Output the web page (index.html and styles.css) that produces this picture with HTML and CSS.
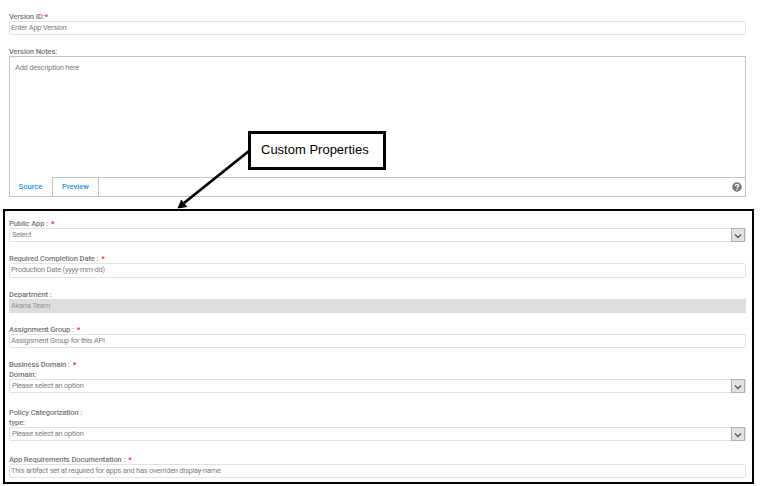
FILE: index.html
```html
<!DOCTYPE html>
<html lang="en">
<head>
<meta charset="utf-8">
<title>App Version</title>
<link rel="stylesheet" href="styles.css">
</head>
<body>
<main class="page">
  <section class="general">
    <div class="field">
      <div class="label"><span>Version ID:</span><b class="req tight">*</b></div>
      <div class="input"><span>Enter App Version</span></div>
    </div>
    <div class="field">
      <div class="label"><span>Version Notes:</span></div>
      <div class="editor">
        <div class="editor-body"><span>Add description here</span></div>
        <div class="tabs">
          <div class="tab active">Source</div>
          <div class="tab">Preview</div>
          <div class="tab-rest">
            <svg class="help" viewBox="0 0 10 10"><circle cx="5" cy="5" r="4.7" fill="#777"/><path d="M3.5 3.9C3.5 1.9 6.7 2 6.6 3.9C6.5 4.9 5.1 4.8 5.1 6" fill="none" stroke="#fff" stroke-width="1.3"/><path d="M4.4 6.8h1.4V8H4.4z" fill="#fff"/></svg>
          </div>
        </div>
      </div>
    </div>
  </section>
  <section class="custom">
    <div class="field">
      <div class="label"><span>Public App :</span><b class="req">*</b></div>
      <div class="input select"><span>Select</span><i class="arrow"><svg viewBox="0 0 12 12"><path d="M3 5.5l3 3 3-3" /></svg></i></div>
    </div>
    <div class="field">
      <div class="label"><span>Required Completion Date :</span><b class="req">*</b></div>
      <div class="input"><span>Production Date (yyyy-mm-dd)</span></div>
    </div>
    <div class="field">
      <div class="label"><span>Department :</span></div>
      <div class="input disabled"><span>Akana Team</span></div>
    </div>
    <div class="field">
      <div class="label"><span>Assignment Group :</span><b class="req">*</b></div>
      <div class="input"><span>Assignment Group for this API</span></div>
    </div>
    <div class="field business">
      <div class="label"><span>Business Domain :</span><b class="req">*</b></div>
      <div class="label"><span>Domain:</span></div>
      <div class="input select"><span>Please select an option</span><i class="arrow"><svg viewBox="0 0 12 12"><path d="M3 5.5l3 3 3-3" /></svg></i></div>
    </div>
    <div class="field policy">
      <div class="label"><span>Policy Categorization :</span></div>
      <div class="label"><span>type:</span></div>
      <div class="input select"><span>Please select an option</span><i class="arrow"><svg viewBox="0 0 12 12"><path d="M3 5.5l3 3 3-3" /></svg></i></div>
    </div>
    <div class="field">
      <div class="label"><span>App Requirements Documentation :</span><b class="req">*</b></div>
      <div class="input"><span>This artifact set at required for apps and has overriden display-name</span></div>
    </div>
  </section>
  <svg class="pointer" viewBox="0 0 761 486"><path d="M249 151L184 203" stroke="#000" stroke-width="2.8"/><path d="M177.5 208.5L181.2 199.5L187.5 207z"/></svg>
  <div class="callout">Custom Properties</div>
</main>
</body>
</html>
```
FILE: styles.css
```css
* { box-sizing: border-box; }
body { margin: 0; background: #fff; }
.page {
  position: relative;
  width: 761px;
  height: 486px;
  overflow: hidden;
  padding: 11px 7px 0 3px;
  font: 7.5px/10px Roboto, "Liberation Sans", sans-serif;
  letter-spacing: -0.25px;
  color: #808080;
}
.general { height: 198px; padding: 0 8px 0 6px; }
.custom {
  width: 751px;
  height: 275px;
  border: 2px solid #000;
  padding: 7px 6px 0 4px;
}
.field { margin-bottom: 11px; }
.business { margin-bottom: 13.6px; }
.policy { margin-bottom: 12.6px; }
.label {
  display: flex;
  height: 10px;
  line-height: 11px;
  font-size: 7.6px;
  font-weight: 500;
  letter-spacing: -0.13px;
  color: #777;
  white-space: nowrap;
}
.req { color: #f33; margin-left: 3px; font-size: 8px; line-height: 12px; }
.tight { margin-left: 0; }
.input {
  display: flex;
  align-items: center;
  justify-content: space-between;
  width: 737px;
  height: 14.3px;
  border: 1px solid #e2e2e2;
  border-radius: 2px;
  padding-left: 1px;
  white-space: nowrap;
}
.select { padding-left: 2px; }
.disabled { background: #dcdddf; border-color: #dcdddf; border-radius: 0; color: #959595; }
.arrow {
  width: 14px;
  height: 14px;
  background: #e2e2e2;
  border: 1px solid #b0b0b0;
}
.arrow svg { display: block; width: 12px; height: 12px; fill: none; stroke: #555; stroke-width: 1.3; }
.editor { width: 737px; height: 141px; border: 1px solid #bfc4c4; display: flex; flex-direction: column; }
.editor-body { flex: 1; padding: 6px 5px; }
.tabs { display: flex; height: 19px; }
.tab {
  width: 46px;
  border: solid #bfc4c4;
  border-width: 1px 1px 0 0;
  color: #2a8cf0;
  font-size: 7.6px;
  font-weight: 500;
  letter-spacing: 0;
  text-align: center;
  line-height: 17px;
}
.active { width: 43px; border-top: 0; line-height: 20px; padding-right: 1px; }
.tab-rest { flex: 1; display: flex; align-items: center; justify-content: flex-end; border-top: 1px solid #bfc4c4; padding-right: 3px; }
.help { width: 10px; height: 10px; }
.pointer { position: absolute; left: 0; top: 0; width: 761px; height: 486px; }
.callout {
  position: absolute;
  left: 248px;
  top: 131px;
  width: 138px;
  height: 39px;
  border: 3px solid #000;
  background: #fff;
  padding-left: 10px;
  font: 13px/31px "Liberation Sans", sans-serif;
  letter-spacing: 0;
  color: #000;
}
```
